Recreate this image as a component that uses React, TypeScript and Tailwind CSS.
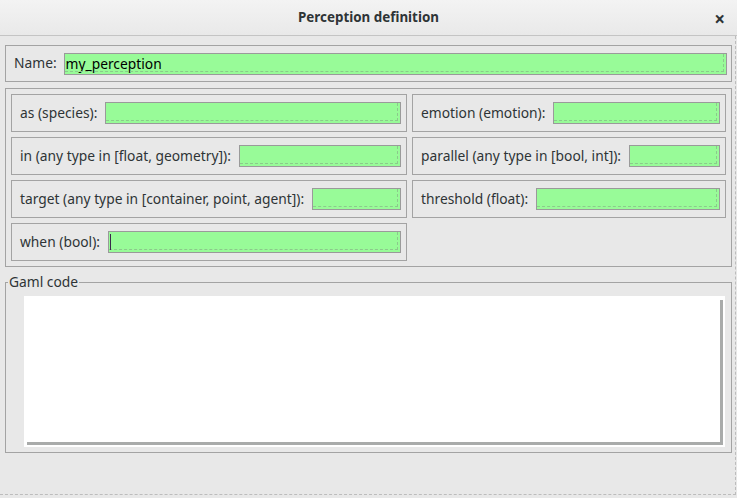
import React from "react";

const font = { fontFamily: '"Noto Sans", "Open Sans", sans-serif' };

function Field({ caret = false }: { caret?: boolean }) {
  return (
    <div className="relative flex-1 h-[22px] border border-[#9a9a9a] bg-[#98fb98]">
      <div className="absolute left-0 right-[2px] top-0 bottom-[2px] border-b border-r border-dashed border-[#8cc98c]" />
      {caret && <div className="absolute left-[1px] top-[2px] bottom-[2px] w-[1px] bg-[#3a2a4a]" />}
    </div>
  );
}

function Cell({ label, caret }: { label: string; caret?: boolean }) {
  return (
    <div className="h-[38px] border border-[#a3a3a3] flex items-center pl-[8px] pr-[5px] gap-[8px]">
      <span className="whitespace-nowrap text-[13.8px] text-[#2e3436]">{label}</span>
      <Field caret={caret} />
    </div>
  );
}

export default function App() {
  return (
    <div className="w-[737px] h-[498px] bg-[#e8e8e8] flex flex-col overflow-hidden" style={font}>
      <div className="h-[36px] shrink-0 flex items-center justify-center relative bg-gradient-to-b from-[#f3f3f3] to-[#e9e9e9] border-b border-[#c4c4c4]">
        <span className="text-[13.4px] font-bold text-[#2e3436]">Perception definition</span>
        <span className="absolute right-[12px] top-[5px] text-[19px] font-bold text-[#2e3436]">×</span>
      </div>
      <div className="flex-1 flex flex-col w-[736px] h-[459px] border-r border-b border-dashed border-[#bcbcbc] pl-[5px] pr-[3px] mb-[3px]">
        <div className="mt-[9px] h-[37px] border border-[#a3a3a3] flex items-center pl-[8px] pr-[4px] gap-[7px]">
          <span className="text-[13.8px] text-[#2e3436]">Name:</span>
          <div className="relative flex-1 h-[22px] border border-[#9a9a9a] bg-[#98fb98] flex items-center pl-[1px]">
            <span className="text-[13.8px] text-black leading-none">my_perception</span>
            <div className="absolute left-0 right-[2px] top-0 bottom-[2px] border-b border-r border-dashed border-[#8cc98c]" />
          </div>
        </div>
        <div className="mt-[6px] border border-[#a3a3a3] pl-[5px] pt-[5px] pb-[5px] pr-[4px]">
          <div className="grid grid-cols-[396px_314px] gap-x-[5px] gap-y-[5px]">
            <Cell label="as (species):" />
            <Cell label="emotion (emotion):" />
            <Cell label="in (any type in [float, geometry]):" />
            <Cell label="parallel (any type in [bool, int]):" />
            <Cell label="target (any type in [container, point, agent]):" />
            <Cell label="threshold (float):" />
            <Cell label="when (bool):" caret />
          </div>
        </div>
        <div className="relative mt-[15px] h-[171px] border border-[#a3a3a3] pl-[18px] pr-[6px] pt-[13px] pb-[5px]">
          <span className="absolute left-[2px] top-[-11px] bg-[#e8e8e8] px-[1px] text-[13.8px] text-[#2e3436] leading-[20px]">Gaml code</span>
          <div className="relative w-full h-full bg-white">
            <div className="absolute right-[2px] top-[4px] bottom-[2px] w-[3px] bg-[#a9abaa]" />
            <div className="absolute left-[3px] right-[2px] bottom-[2px] h-[3px] bg-[#a9abaa]" />
          </div>
        </div>
      </div>
    </div>
  );
}
